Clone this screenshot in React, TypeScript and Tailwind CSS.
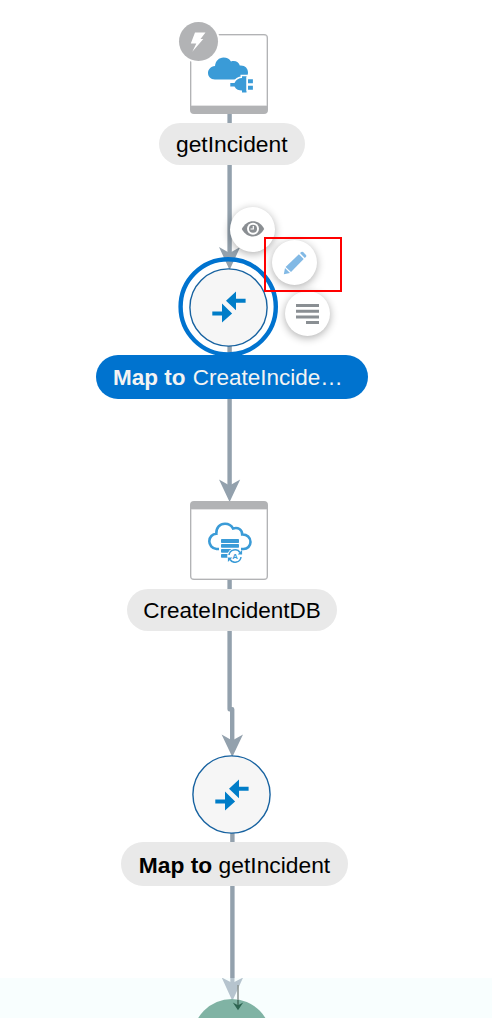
import type { ReactNode } from 'react';

function MapIcon() {
  return (
    <svg className="h-8 w-[34px]" viewBox="0 0 34 32" fill="#007dc8">
      <path d="M.3 20.6H10V12.4L20.1 22.4 10 31.6V24.6H.3Z" />
      <path d="M33.6 7.8H24V0.5L14 9.8 24 19.3V11.7H33.6Z" />
    </svg>
  );
}

function MapNode({ place }: { place: string }) {
  return (
    <div className={`absolute ${place}`}>
      <svg className="absolute inset-0" width="79" height="79" viewBox="0 0 79 79">
        <circle cx="39.5" cy="39.5" r="38.6" fill="#f6f6f6" stroke="#1762a0" strokeWidth="1.4" />
      </svg>
      <div className="relative flex size-[79px] items-center justify-center">
        <MapIcon />
      </div>
    </div>
  );
}

function Label({ place, children }: { place: string; children: ReactNode }) {
  return (
    <div className={`absolute flex items-center rounded-full whitespace-pre ${place}`}>
      <span>{children}</span>
    </div>
  );
}

function ActionButton({ place, children }: { place: string; children: ReactNode }) {
  return (
    <button className={`absolute flex size-[45px] items-center justify-center rounded-full bg-white shadow-[0_2px_8px_rgba(0,0,0,0.32)] ${place}`}>
      {children}
    </button>
  );
}

function Connectors() {
  return (
    <svg className="absolute inset-0" width="492" height="1018" viewBox="0 0 492 1018">
      <g fill="none" stroke="#93a1ad" strokeWidth="4.4" strokeLinejoin="round">
        <path d="M229.6 114V258M229.6 346V492M229.6 580V709.3H232.2V748M232.4 833V990" />
      </g>
      <g fill="#93a1ad">
        <path d="M229.6 270L219 247 229.6 253 240.2 247Z" />
        <path d="M229.6 502L219 479.5 229.6 485.5 240.2 479.5Z" />
        <path d="M232.3 757L221.6 734.5 232.3 740.5 243 734.5Z" />
      </g>
    </svg>
  );
}

function CloudPlug() {
  return (
    <svg className="absolute left-[16px] top-[21px]" width="46" height="38" viewBox="0 0 46 38">
      <path d="M8 23.5C3.5 23.5 1 20.5 1 17S3.5 10.5 8 10C8.5 5 12 1.5 16.5 1.5 20 1.5 22.5 3 24 5.5 28 4 32 6 32.8 9.5 38 9 41 12.5 41 16.5 41 21 38 23.5 34 23.5Z" fill="#3a9bd7" />
      <path d="M23.3 27H27.5C29 23.5 32 22 35 22V20.3H39.5V36.5H35V34.5C32 34.5 29 33.5 27.5 30.5H23.3Z" fill="#3a9bd7" stroke="#fff" strokeWidth="3" paintOrder="stroke" />
      <path d="M39.5 21H46V35H39.5Z" fill="#fff" />
      <path d="M41 23.3H45.9V27.3H41ZM41 29.7H45.9V33.7H41Z" fill="#3a9bd7" />
    </svg>
  );
}

function CloudDatabase() {
  return (
    <svg width="46" height="42" viewBox="0 0 46 42">
      <path d="M12 28H9.5C5 27.5 2.3 24 2.3 20.3 2.3 16 5.5 13 9.3 12.8 9 6.5 13 2.7 18 2.7 22 2.7 24.5 4.5 26 7.5 31 5.7 35.2 8.7 35.2 13.5 40 13.3 43.5 16.5 43.5 21 43.5 25 40.5 28 36.5 28H34" fill="none" stroke="#3a9bd7" strokeWidth="2.6" />
      <g fill="#3a9bd7">
        <rect x="14" y="18" width="18" height="4" rx=".7" />
        <rect x="14" y="23" width="18" height="3.8" rx=".7" />
        <rect x="14" y="28" width="18" height="3.8" rx=".7" />
        <rect x="14" y="33" width="18" height="3.8" rx=".7" />
      </g>
      <circle cx="28" cy="35" r="7.8" fill="#fff" />
      <path d="M22 34A6 6 0 0 1 33 31.5M34 36A6 6 0 0 1 23 38.5" fill="none" stroke="#3a9bd7" strokeWidth="1.5" />
      <path d="M35.1 29V33.6H30.7ZM20.9 41V36.4H25.3Z" fill="#3a9bd7" />
      <text x="28" y="37.8" textAnchor="middle" fontSize="7.8" fontWeight="bold" fill="#3a9bd7">A</text>
    </svg>
  );
}

export default function App() {
  return (
    <main className="relative h-[1018px] w-[492px] overflow-hidden bg-white font-['Liberation_Sans',Arial,sans-serif] text-[22.8px] leading-none text-black">
      <Connectors />

      <section className="absolute left-[190px] top-[34px] h-20 w-[78px] rounded-[4px] border border-b-8 border-[#b2b3b5] bg-white shadow-[inset_0_0_0_0.5px_#c8c8ca]">
        <CloudPlug />
        <div className="absolute -left-3 -top-[13px] flex size-[39px] items-center justify-center rounded-full bg-[#b2b3b5] ring-2 ring-white">
          <svg width="17" height="20" viewBox="0 0 17 20" fill="#fff">
            <path d="M5 .5H15.5L10.5 7H13.3L2.3 19.7 6.3 11.5H.8Z" />
          </svg>
        </div>
      </section>
      <Label place="left-[159px] top-[122.5px] h-[42.5px] w-[145.5px] justify-center bg-[#e9e9e9] pt-[2px]">getIncident</Label>

      <svg className="absolute left-[178px] top-[256px]" width="102" height="102" viewBox="0 0 102 102">
        <circle cx="50.2" cy="50.8" r="47.6" fill="none" stroke="#0073cf" strokeWidth="4.4" />
      </svg>
      <MapNode place="left-[189px] top-[267.5px]" />
      <Label place="left-[96px] top-[355px] h-[43.5px] w-[271.5px] bg-[#0073cf] pl-[17px] pt-[3px] text-[22.5px] text-[#f3f3f3]"><b className="mr-[1px]">Map to</b> CreateIncide…</Label>

      <ActionButton place="left-[230px] top-[206.5px]">
        <svg width="24" height="18" viewBox="0 0 24 18" fill="none">
          <path d="M.8 9C6-1.4 18-1.4 23.2 9 18 19 6 19 .8 9Z" fill="#8a8e92" />
          <circle cx="12" cy="8.8" r="6" fill="#fff" />
          <circle cx="12" cy="8.8" r="4" fill="#8a8e92" />
          <path d="M12.3 6V9H9.5" stroke="#fff" strokeWidth="1.2" />
        </svg>
      </ActionButton>
      <ActionButton place="left-[285px] top-[291px]">
        <svg width="23" height="20" viewBox="0 0 23 20" fill="#8a8f93">
          <path d="M0 0H23V3H0ZM0 5.7H23V8.7H0ZM0 11.4H23V14.4H0ZM10 17H23V20H10Z" />
        </svg>
      </ActionButton>
      <ActionButton place="left-[272px] top-[240px]">
        <svg width="24" height="24" viewBox="0 0 24 24" fill="#82b9e5">
          <path d="M.8 23.2L2 17 7 22Z" />
          <path d="M2.6 15.9L15.9 3.3 20.7 8.1 8 21.1Z" />
          <path d="M17 2.1L18.3.9Q19.2.3 20.1 1.1L23 4Q23.7 5 22.9 5.9L21.8 7Z" />
        </svg>
      </ActionButton>
      <div className="pointer-events-none absolute left-[264px] top-[237px] h-[55px] w-[78px] border-2 border-[#ff0000]" />

      <section className="absolute left-[190px] top-[501px] flex h-[79px] w-[78px] items-start justify-center rounded-[4px] border border-t-8 border-[#b2b3b5] bg-white pl-[2px] pt-3 shadow-[inset_0_0_0_0.5px_#c8c8ca]">
        <CloudDatabase />
      </section>
      <Label place="left-[127px] top-[589px] h-[42px] w-[210px] justify-center bg-[#e9e9e9] pt-[2px] text-[22.5px]">CreateIncidentDB</Label>

      <MapNode place="left-[192px] top-[755px]" />
      <Label place="left-[121px] top-[842px] h-[43.5px] w-[227px] justify-center bg-[#e9e9e9] pt-[3px]"><b>Map to</b> getIncident</Label>

      <svg className="absolute left-0 top-[978px]" width="492" height="40" viewBox="0 0 492 40">
        <rect width="492" height="40" fill="#f8fefe" />
        <path d="M232.4 23L221.7-.5 232.4 5 243.1-.5Z" fill="#b6c4ce" />
        <path d="M230.3 0H234.5V12H230.3Z" fill="#b6c4ce" />
        <circle cx="231.8" cy="60.2" r="39.2" fill="#80b3a4" />
        <path d="M238 7V22" stroke="#8e9795" strokeWidth="1.6" />
        <path d="M238 22V31" stroke="#4b7566" strokeWidth="1.8" />
        <path d="M232.8 24.5L238 27.2 243.2 24.5 238 32.2Z" fill="#2d6551" />
      </svg>
    </main>
  );
}
